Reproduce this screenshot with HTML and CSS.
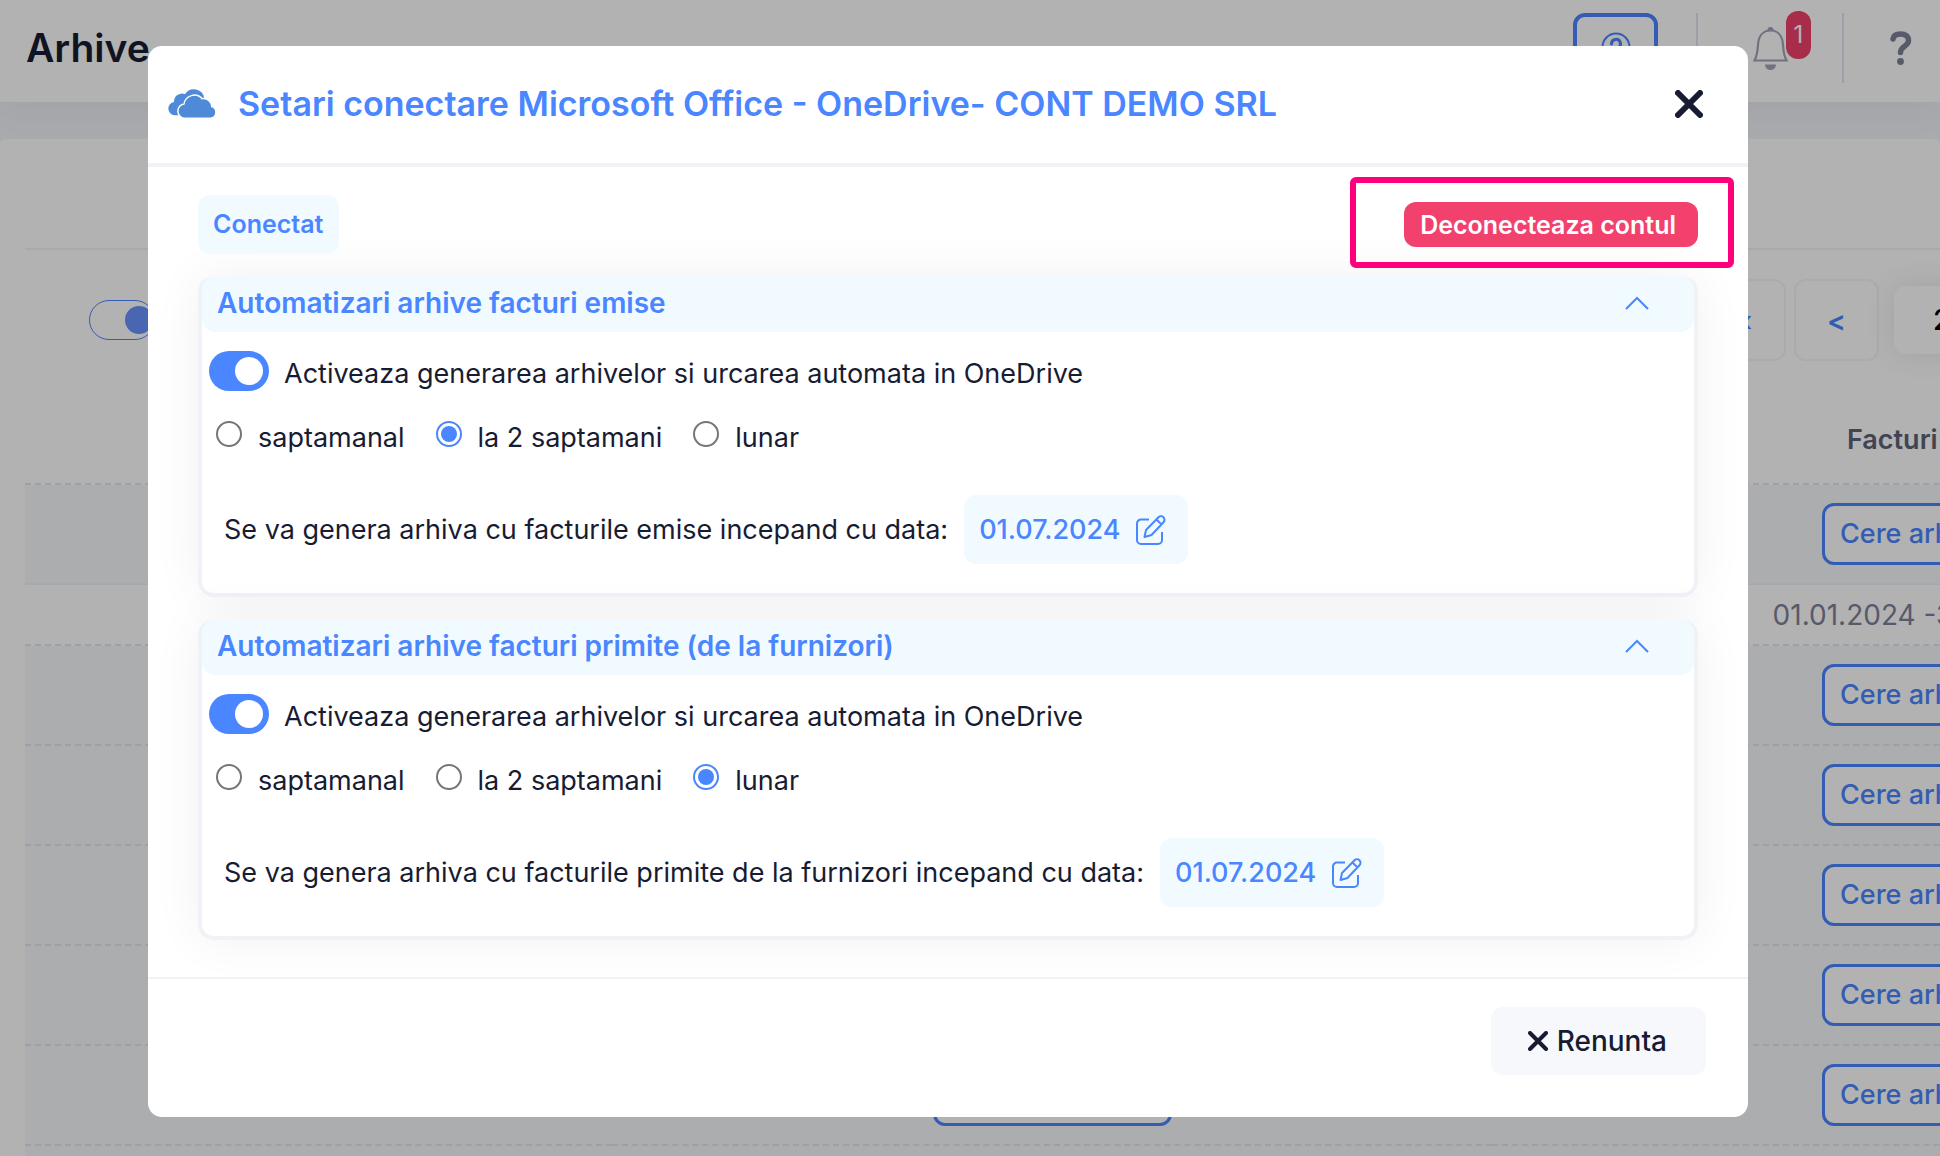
FILE: index.html
```html
<!DOCTYPE html>
<html lang="ro">
<head>
<meta charset="utf-8">
<title>Arhive</title>
<link rel="stylesheet" href="styles.css">
</head>
<body>
<div class="app">
  <header class="topbar">
    <h1 class="page-title">Arhive</h1>
    <nav class="topbar-tools">
      <button class="help-btn" type="button" aria-label="Ajutor">
        <svg width="30" height="30" viewBox="0 0 30 30" fill="none" stroke="currentColor" stroke-width="2" stroke-linecap="round"><circle cx="15" cy="15" r="13.5"/><path d="M10.500 12a4.500 4.500 0 1 1 6.700 3.800C15.600 16.800 15 17.500 15 19M15 23v.5" stroke-width="3"/></svg>
      </button>
      <span class="divider"></span>
      <button class="bell-btn" type="button" aria-label="Notificari">
        <svg width="38" height="46" viewBox="0 0 38 46" fill="none"><path d="M2.500 35.500C4.800 31.500 5.600 26 6 20 6.500 11 11 5.500 18.500 5.500S30.500 11 31 20c.4 6 1.200 11.500 3.500 15.500z" stroke="currentColor" stroke-width="2.200"/><path d="M15.500 5a3 3 0 0 1 6 0zM13 39.500h11a5.500 5.500 0 0 1-11 0z" fill="currentColor"/></svg>
        <span class="count">1</span>
      </button>
      <span class="divider divider-last"></span>
      <button class="question-btn" type="button" aria-label="Intrebari">
        <svg width="22" height="34" viewBox="0 0 22 34" fill="none" stroke="currentColor" stroke-width="5.500" stroke-linecap="round" stroke-linejoin="round"><path d="M3 8C3.500 4.500 6.500 3 10.500 3 15.500 3 18.500 5.500 18.500 9.500 18.500 15.500 10.500 15 10.500 21.500"/><circle cx="10.500" cy="30.500" r="3.400" fill="currentColor" stroke="none"/></svg>
      </button>
    </nav>
  </header>

  <main class="panel">
    <div class="panel-head"></div>
    <div class="wide">
      <div class="toolbar">
        <input class="switch-outline" type="checkbox" checked aria-label="Afisare">
        <div class="pager">
          <button class="page-btn" type="button">«</button>
          <button class="page-btn" type="button">&lt;</button>
          <input class="year" type="text" value="2024" aria-label="An">
          <button class="page-btn" type="button">&gt;</button>
          <button class="page-btn" type="button">»</button>
        </div>
      </div>
      <table class="archives">
        <colgroup><col class="col-a"><col class="col-b"><col class="col-c"></colgroup>
        <thead><tr><th></th><th>Facturi emise</th><th>Facturi primite</th></tr></thead>
        <tbody>
          <tr class="lead"><td></td><td><button class="ask" type="button">Cere arhiva</button></td><td><button class="ask" type="button">Cere arhiva</button></td></tr>
          <tr class="period"><td></td><td>01.01.2024 -31.12.2024</td><td>01.01.2024 -31.12.2024</td></tr>
          <tr><td></td><td><button class="ask" type="button">Cere arhiva</button></td><td><button class="ask" type="button">Cere arhiva</button></td></tr>
          <tr><td></td><td><button class="ask" type="button">Cere arhiva</button></td><td><button class="ask" type="button">Cere arhiva</button></td></tr>
          <tr><td></td><td><button class="ask" type="button">Cere arhiva</button></td><td><button class="ask" type="button">Cere arhiva</button></td></tr>
          <tr><td></td><td><button class="ask" type="button">Cere arhiva</button></td><td><button class="ask" type="button">Cere arhiva</button></td></tr>
          <tr><td></td><td><button class="ask" type="button">Cere arhiva</button></td><td><button class="ask" type="button">Cere arhiva</button></td></tr>
          <tr><td></td><td></td><td></td></tr>
        </tbody>
      </table>
    </div>
  </main>

  <div class="overlay">
    <section class="modal" role="dialog" aria-labelledby="dialog-title">
      <header class="modal-head">
        <svg class="cloud" width="48" height="30" viewBox="0 0 48 30">
          <path d="M6.500 26.200a6.700 6.700 0 0 1-.5-13.300A7.800 7.800 0 0 1 17 5.300a10.500 10.500 0 0 1 19.300 4.200L30 20 12 26.200z"/>
          <path class="cloud-front" d="M17.500 28.600a6.500 6.500 0 0 1-.8-13 9.600 9.600 0 0 1 17-5.100 7.500 7.500 0 0 1 9.300 7.500 5.400 5.400 0 0 1-.5 10.600z"/>
        </svg>
        <h2 class="modal-title" id="dialog-title">Setari conectare Microsoft Office - OneDrive- CONT DEMO SRL</h2>
        <button class="close" type="button" aria-label="Inchide">
          <svg width="28" height="28" viewBox="0 0 28 28"><path d="M3 3l22 22M25 3L3 25"/></svg>
        </button>
      </header>

      <div class="modal-body">
        <div class="status">
          <span class="connected">Conectat</span>
          <div class="disconnect-wrap">
            <button class="disconnect" type="button">Deconecteaza contul</button>
            <span class="marker"></span>
          </div>
        </div>

        <section class="card">
          <h3 class="card-head">Automatizari arhive facturi emise
            <svg class="chevron" width="24" height="14" viewBox="0 0 24 14"><path d="M1 13L12 2l11 11"/></svg>
          </h3>
          <div class="card-body">
            <label class="toggle-row"><input class="switch" type="checkbox" checked><span>Activeaza generarea arhivelor si urcarea automata in OneDrive</span></label>
            <div class="choices">
              <label class="choice"><input class="radio" type="radio" name="issued"><span>saptamanal</span></label>
              <label class="choice"><input class="radio" type="radio" name="issued" checked><span>la 2 saptamani</span></label>
              <label class="choice"><input class="radio" type="radio" name="issued"><span>lunar</span></label>
            </div>
            <div class="start">
              <span>Se va genera arhiva cu facturile emise incepand cu data:</span>
              <button class="date-btn" type="button">01.07.2024
                <svg width="30" height="30" viewBox="0 0 30 30"><path d="M13 4.500H5a4 4 0 0 0-4 4V25a4 4 0 0 0 4 4h17a4 4 0 0 0 4-4v-8M8.500 22l1.500-7L22.500 2.300a3.200 3.200 0 0 1 5 4.900L15.500 20zM20.500 4.500l5 5"/></svg>
              </button>
            </div>
          </div>
        </section>

        <section class="card">
          <h3 class="card-head">Automatizari arhive facturi primite (de la furnizori)
            <svg class="chevron" width="24" height="14" viewBox="0 0 24 14"><path d="M1 13L12 2l11 11"/></svg>
          </h3>
          <div class="card-body">
            <label class="toggle-row"><input class="switch" type="checkbox" checked><span>Activeaza generarea arhivelor si urcarea automata in OneDrive</span></label>
            <div class="choices">
              <label class="choice"><input class="radio" type="radio" name="received"><span>saptamanal</span></label>
              <label class="choice"><input class="radio" type="radio" name="received"><span>la 2 saptamani</span></label>
              <label class="choice"><input class="radio" type="radio" name="received" checked><span>lunar</span></label>
            </div>
            <div class="start">
              <span>Se va genera arhiva cu facturile primite de la furnizori incepand cu data:</span>
              <button class="date-btn" type="button">01.07.2024
                <svg width="30" height="30" viewBox="0 0 30 30"><path d="M13 4.500H5a4 4 0 0 0-4 4V25a4 4 0 0 0 4 4h17a4 4 0 0 0 4-4v-8M8.500 22l1.500-7L22.500 2.300a3.200 3.200 0 0 1 5 4.900L15.500 20zM20.500 4.500l5 5"/></svg>
              </button>
            </div>
          </div>
        </section>
      </div>

      <footer class="modal-foot">
        <button class="cancel" type="button">
          <svg width="20" height="20" viewBox="0 0 20 20"><path d="M2 2l16 16M18 2L2 18"/></svg>Renunta
        </button>
      </footer>
    </section>
  </div>
</div>
</body>
</html>
```

FILE: styles.css
```css
:root {
  --blue: #4a86ff;
  --ink: #181c32;
  --line: #f0f2f7;
  --pale: #f1faff;
}

* { box-sizing: border-box; }

body {
  margin: 0;
  background: #f1f4f8;
  color: var(--ink);
  font-family: Inter, "Liberation Sans", sans-serif;
  font-size: 28px;
  line-height: 36px;
}

button, input {
  margin: 0;
  padding: 0;
  border: 0;
  background: none;
  color: inherit;
  font: inherit;
}

h1, h2, h3 { margin: 0; font-weight: 600; }

svg { display: block; flex: none; }

.app {
  position: relative;
  display: flex;
  flex-direction: column;
  height: 100vh;
  overflow: hidden;
}

/* Page behind the dialog */
.topbar {
  display: flex;
  flex: none;
  justify-content: space-between;
  height: 102px;
  padding: 13px 28px 19px 26px;
  background: #fff;
  box-shadow: 0 10px 30px rgba(82, 63, 105, .05);
}

.page-title { font-size: 39px; line-height: 70px; }

.topbar-tools { display: flex; align-items: stretch; }

.help-btn {
  display: flex;
  align-items: flex-start;
  justify-content: center;
  width: 85px;
  margin-right: 38px;
  padding-top: 15px;
  border: 4px solid var(--blue);
  border-radius: 12px;
  color: var(--blue);
}

.divider { width: 2px; background: #e4e6ef; }

.bell-btn {
  position: relative;
  display: flex;
  align-items: flex-start;
  width: 38px;
  margin: 0 52px 0 54px;
  padding-top: 12px;
  color: #a1a5b7;
}

.count {
  position: absolute;
  top: -2px;
  left: 34px;
  width: 25px;
  border-radius: 12px;
  background: #f1416c;
  color: #fff;
  font-size: 24px;
  line-height: 48px;
  text-align: center;
}

.divider-last { margin-right: 46px; }

.question-btn { display: flex; align-items: center; color: #7e8299; }

.panel {
  flex: none;
  margin-top: 37px;
  border-radius: 6px;
  background: #fff;
}

.panel-head {
  height: 111px;
  margin-left: 25px;
  border-bottom: 2px solid var(--line);
}

.wide { min-width: 2391px; padding-left: 25px; }

.toolbar {
  display: flex;
  align-items: center;
  justify-content: space-between;
  padding: 29px 0 28px 64px;
}

.switch-outline {
  appearance: none;
  display: flex;
  align-items: center;
  justify-content: flex-end;
  width: 66px;
  height: 40px;
  padding: 0 1px;
  border: 1px solid var(--blue);
  border-radius: 20px;
}

.switch-outline::before {
  content: "";
  width: 28px;
  height: 28px;
  border-radius: 50%;
  background: #6993ff;
}

.pager { display: flex; align-items: center; gap: 8px; }

.page-btn {
  width: 85px;
  height: 82px;
  padding-top: 2px;
  border: 2px solid #f5f5f7;
  border-radius: 12px;
  color: var(--blue);
  font-weight: 600;
}

.year {
  width: 304px;
  height: 68px;
  margin: 0 7px;
  padding-left: 39px;
  border-radius: 12px;
  background: #fff;
  box-shadow: 0 0 30px rgba(0, 0, 0, .1);
  color: #000;
  font-weight: 500;
}

.archives {
  width: 100%;
  border-spacing: 0;
  table-layout: fixed;
  text-align: center;
}

.col-a { width: 587px; }
.col-b { width: 880px; }

.archives th {
  height: 96px;
  padding: 8px 0 0;
  border-bottom: 2px dashed #e4e6ef;
  color: #5e6278;
  font-size: 27px;
  font-weight: 600;
}

.archives td {
  height: 100px;
  padding: 0;
  border-bottom: 2px dashed #e4e6ef;
  background: #f7f8fb;
}

.archives .lead td { border-bottom: 2px solid var(--line); }

.archives .period td {
  height: 61px;
  padding-right: 34px;
  background: #fff;
  color: #7e8299;
}

.ask {
  width: 239px;
  height: 62px;
  padding-left: 15px;
  border: 3px solid var(--blue);
  border-radius: 12px;
  background: #fff;
  color: var(--blue);
  font-size: 27px;
  font-weight: 500;
  text-align: left;
  vertical-align: middle;
}

/* Dialog */
.overlay {
  position: absolute;
  inset: 0;
  padding: 46px 192px 39px 148px;
  background: rgba(0, 0, 0, .3);
}

.modal {
  border-radius: 14px;
  background: #fff;
}

.modal-head {
  display: flex;
  align-items: center;
  padding: 34px 45px 35px 20px;
  border-bottom: 4px solid var(--line);
}

.cloud { fill: #4e8ad8; }
.cloud-front { stroke: #fff; stroke-width: 3; paint-order: stroke; }

.modal-title {
  flex: 1;
  margin-left: 22px;
  color: var(--blue);
  font-size: 34px;
  line-height: 48px;
}

.close svg, .cancel svg { stroke: var(--ink); stroke-linecap: round; }
.close svg { stroke-width: 6; }

.modal-body { padding: 28px 50px 37px; }

.status {
  display: flex;
  align-items: center;
  justify-content: space-between;
  height: 59px;
  margin-bottom: 22px;
}

.connected {
  padding: 0 16px 0 15px;
  border-radius: 12px;
  background: var(--pale);
  color: var(--blue);
  font-size: 25px;
  font-weight: 600;
  line-height: 59px;
}

.disconnect-wrap { position: relative; }

.disconnect {
  display: block;
  height: 45px;
  padding: 0 22px 0 16px;
  border-radius: 12px;
  background: #f1416c;
  color: #fff;
  font-size: 25px;
  font-weight: 600;
}

.marker {
  position: absolute;
  inset: -25px -36px -21px -54px;
  border: 6px solid #ff007c;
  border-radius: 6px;
}

.card {
  border: 4px solid var(--line);
  border-top: 0;
  border-radius: 16px;
  background: #fff;
  box-shadow: 0 0 50px rgba(0, 0, 0, .06);
}

.card + .card { margin-top: 22px; }

.card-head {
  display: flex;
  align-items: center;
  justify-content: space-between;
  height: 56px;
  padding: 0 45px 2px 15px;
  border-radius: 14px;
  background: var(--pale);
  color: var(--blue);
  font-size: 28px;
}

.chevron { fill: none; stroke: var(--blue); stroke-width: 2; }

.card-body { padding: 19px 7px 29px; font-size: 27px; }

.toggle-row { display: flex; gap: 15px; height: 40px; line-height: 46px; }

.switch {
  appearance: none;
  display: flex;
  align-items: center;
  justify-content: flex-end;
  flex: none;
  width: 60px;
  height: 40px;
  padding: 0 6px;
  border-radius: 20px;
  background: var(--blue);
}

.switch::before {
  content: "";
  width: 28px;
  height: 28px;
  border-radius: 50%;
  background: #fff;
}

.choices { display: flex; gap: 31px; margin-top: 27px; padding-left: 7px; }

.choice { display: flex; gap: 16px; line-height: 39px; }

.radio {
  appearance: none;
  display: grid;
  place-items: center;
  flex: none;
  width: 26px;
  height: 26px;
  margin-top: 3px;
  border: 2px solid #767676;
  border-radius: 50%;
  background: #fff;
}

.radio:checked { border-color: var(--blue); }

.radio:checked::before {
  content: "";
  width: 16px;
  height: 16px;
  border-radius: 50%;
  background: var(--blue);
}

.start { display: flex; align-items: center; gap: 16px; margin-top: 38px; padding-left: 15px; }

.date-btn {
  display: flex;
  align-items: center;
  gap: 16px;
  height: 69px;
  padding: 0 22px 0 15px;
  border-radius: 12px;
  background: var(--pale);
  color: var(--blue);
  font-weight: 500;
}

.date-btn svg { fill: none; stroke: var(--blue); stroke-width: 2; stroke-linejoin: round; }

.modal-foot {
  display: flex;
  justify-content: flex-end;
  padding: 28px 42px 42px;
  border-top: 2px solid var(--line);
}

.cancel {
  display: flex;
  align-items: center;
  gap: 9px;
  height: 68px;
  padding: 0 39px 0 37px;
  border-radius: 12px;
  background: #f6f8fb;
  font-weight: 500;
}

.cancel svg { stroke-width: 4; }
```
